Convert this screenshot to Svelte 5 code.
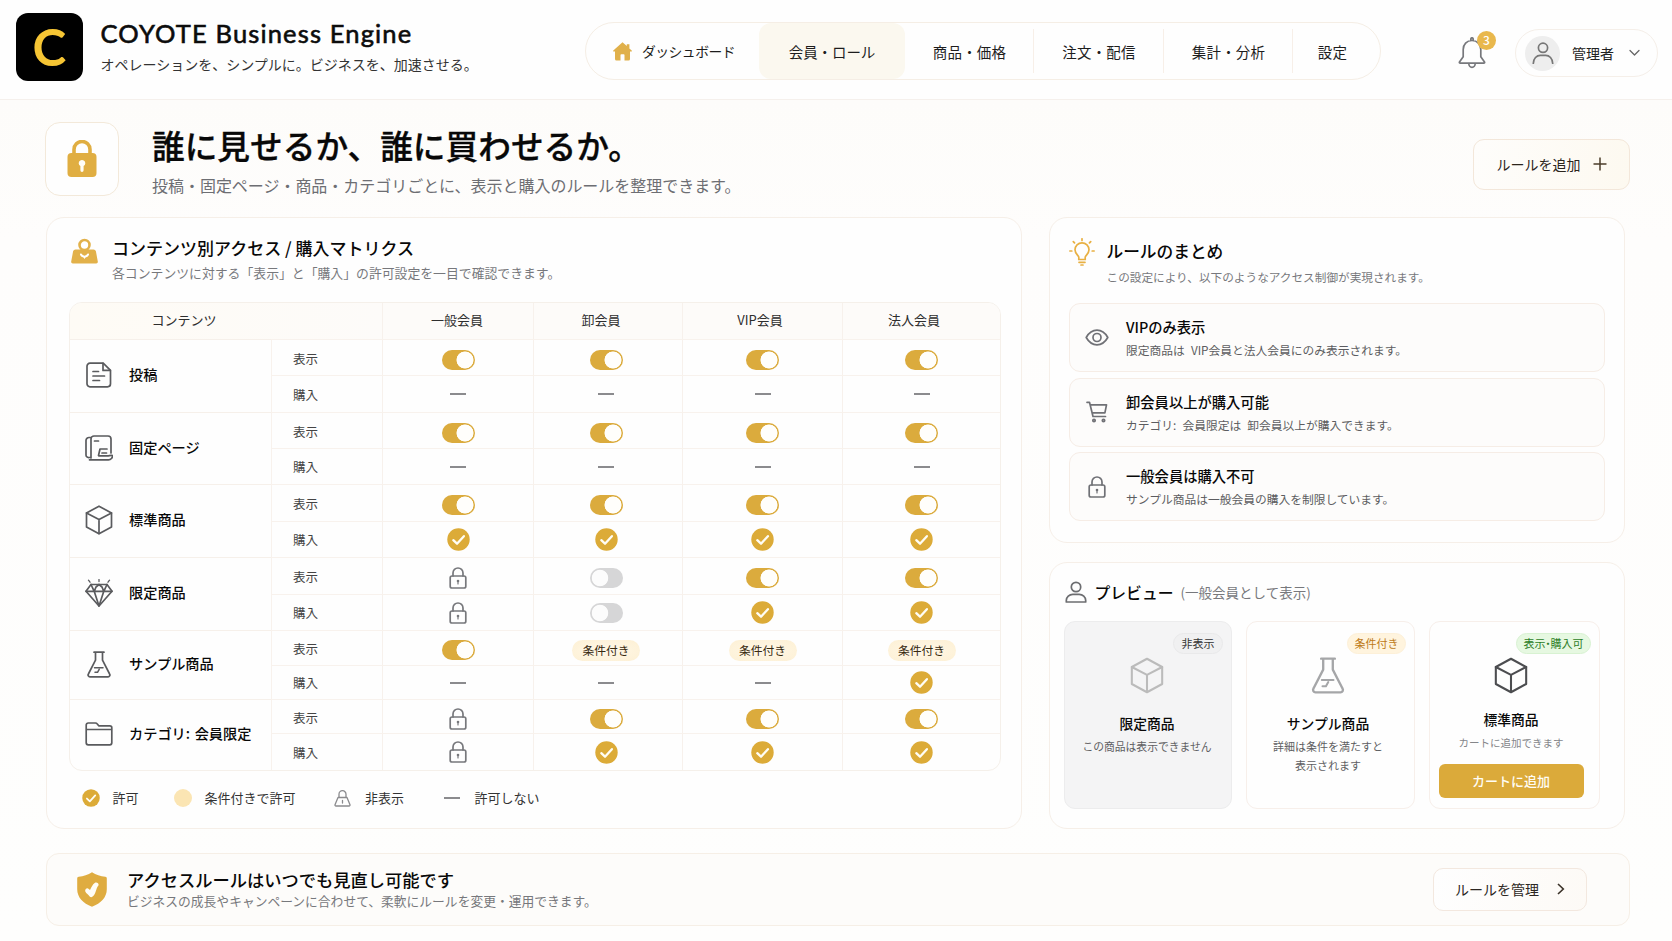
<script lang="ts">
  type Cell = 'on' | 'off' | 'check' | 'lock' | 'cond' | 'none';

  interface Row {
    icon: string;
    name: string;
    view: Cell[];
    buy: Cell[];
  }

  const nav = ['ダッシュボード', '会員・ロール', '商品・価格', '注文・配信', '集計・分析', '設定'];
  const roles = ['一般会員', '卸会員', 'VIP会員', '法人会員'];

  const rows: Row[] = [
    { icon: 'doc', name: '投稿', view: ['on', 'on', 'on', 'on'], buy: ['none', 'none', 'none', 'none'] },
    { icon: 'page', name: '固定ページ', view: ['on', 'on', 'on', 'on'], buy: ['none', 'none', 'none', 'none'] },
    { icon: 'cube', name: '標準商品', view: ['on', 'on', 'on', 'on'], buy: ['check', 'check', 'check', 'check'] },
    { icon: 'gem', name: '限定商品', view: ['lock', 'off', 'on', 'on'], buy: ['lock', 'off', 'check', 'check'] },
    { icon: 'flask', name: 'サンプル商品', view: ['on', 'cond', 'cond', 'cond'], buy: ['none', 'none', 'none', 'check'] },
    { icon: 'folder', name: 'カテゴリ: 会員限定', view: ['lock', 'on', 'on', 'on'], buy: ['lock', 'check', 'check', 'check'] }
  ];

  const rules = [
    { icon: 'eye', title: 'VIPのみ表示', text: '限定商品は VIP会員と法人会員にのみ表示されます。' },
    { icon: 'cart', title: '卸会員以上が購入可能', text: 'カテゴリ: 会員限定は 卸会員以上が購入できます。' },
    { icon: 'lock', title: '一般会員は購入不可', text: 'サンプル商品は一般会員の購入を制限しています。' }
  ];
</script>

{#snippet icon(name: string)}
  {#if name === 'doc'}
    <svg class="line" width="26" height="26" viewBox="0 0 26 26">
      <path d="M4 1.2h13.2l7.3 7.2v13.4a3 3 0 0 1-3 3H4a3 3 0 0 1-3-3V4.200a3 3 0 0 1 3-3z" />
      <path d="M17 1.400v7h7.300M7 9.500h5.500M7 14h11.500M7 18.500h6.500" />
    </svg>
  {:else if name === 'page'}
    <svg class="line" width="28" height="26" viewBox="0 0 28 26">
      <path d="M6 23V4a3 3 0 0 1 3-3h14a3 3 0 0 1 3 3v14M6 2.500H4a3 3 0 0 0-3 3V20a2.500 2.500 0 0 0 3 2.500h2" />
      <path d="M4.500 24.800h19a4 4 0 0 0 4-4.300c-2-.7-3.500.6-5.500.4h-8M13.500 20.500l1.500-6.500h7M17 18h4.500M9.500 6h4" />
    </svg>
  {:else if name === 'cube'}
    <svg class="line" width="28" height="30" viewBox="0 0 28 30">
      <path d="M14 1.200 26.500 8v14L14 28.800 1.500 22V8z" />
      <path d="M1.500 8 14 14.500 26.500 8M14 14.500v14" />
    </svg>
  {:else if name === 'gem'}
    <svg class="line" width="28" height="28" viewBox="0 0 28 28">
      <path d="M6 5.500h16l5 6.800L14 27 1 12.300z" />
      <path d="M1 12.300h26M6 5.500l3.200 6.800L14 27l4.800-14.700L22 5.500M9.200 12.300 11 8l3-2.500L17 8l1.800 4.300" />
      <path d="M3.500 1.200 5 3.200M14 .5v2M24.500 1.200 23 3.200" stroke-width="1.300" />
    </svg>
  {:else if name === 'flask'}
    <svg class="line" width="24" height="27" viewBox="0 0 24 27">
      <path d="M7 1.200h10M8.500 1.200v8L1.400 23a1.800 1.800 0 0 0 1.600 2.800h18a1.800 1.800 0 0 0 1.600-2.800L15.500 9.200v-8" />
      <path d="M7.500 16.800h8.500M8 21.300h2.500l1.700-3" stroke-width="1.500" />
    </svg>
  {:else if name === 'folder'}
    <svg class="line" width="28" height="24" viewBox="0 0 28 24">
      <path d="M1.200 7.500V3a2 2 0 0 1 2-2h7.300a2 2 0 0 1 1.600.8l1.600 2H24.800a2 2 0 0 1 2 2v15a2 2 0 0 1-2 2H3.200a2 2 0 0 1-2-2zH26.800" />
    </svg>
  {:else if name === 'eye'}
    <svg class="line" width="24" height="17" viewBox="0 0 24 17">
      <path d="M1.200 8.500C4 3.600 7.700 1.200 12 1.200s8 2.400 10.800 7.300C20 13.400 16.300 15.800 12 15.800S4 13.400 1.200 8.500z" />
      <circle cx="12" cy="8.500" r="4" />
    </svg>
  {:else if name === 'cart'}
    <svg class="line" width="22" height="22" viewBox="0 0 22 22">
      <path d="M1 1.300h2.500l3.500 14.200h12.500M4.500 3.800h16l-1.600 8H6.200" />
      <circle cx="8" cy="19.500" r="1.200" />
      <circle cx="17.500" cy="19.500" r="1.200" />
    </svg>
  {:else if name === 'lock'}
    <svg class="line" width="18" height="22" viewBox="0 0 18 22">
      <rect x="1.200" y="9" width="15.600" height="12" rx="1.800" />
      <path d="M4 9V6a5 5 0 0 1 10 0v3" />
      <circle cx="9" cy="14" r="1.300" fill="currentColor" stroke="none" />
      <path d="M9 14v3" stroke-width="1.200" />
    </svg>
  {:else if name === 'check'}
    <svg width="23" height="23" viewBox="0 0 23 23">
      <circle cx="11.500" cy="11.500" r="11.200" fill="#dcab38" />
      <path d="M6.300 12.200 10 15.700l6.900-7.500" fill="none" stroke="#fffdf5" stroke-width="2.300" stroke-linecap="round" stroke-linejoin="round" />
    </svg>
  {:else if name === 'user'}
    <svg class="line" width="22" height="22" viewBox="0 0 22 22">
      <circle cx="11" cy="6" r="4.700" />
      <path d="M1.300 21v-1.500c0-3.600 3-6.200 6.500-6.200h6.400c3.500 0 6.500 2.600 6.500 6.200V21z" />
    </svg>
  {/if}
{/snippet}

{#snippet mark(kind: Cell)}
  {#if kind === 'on' || kind === 'off'}
    <span class="toggle" class:off={kind === 'off'}></span>
  {:else if kind === 'cond'}
    <span class="pill">条件付き</span>
  {:else if kind === 'none'}
    <span class="dash"></span>
  {:else}
    {@render icon(kind)}
  {/if}
{/snippet}

<div class="page">
  <header>
    <div class="brand">
      <div class="logo">C</div>
      <div>
        <div class="brand-name">COYOTE Business Engine</div>
        <div class="tagline">オペレーションを、シンプルに。ビジネスを、加速させる。</div>
      </div>
    </div>

    <nav>
      {#each nav as item, i}
        <a href="#top" class:home={i === 0} class:active={i === 1}>
          {#if i === 0}
            <svg width="19" height="19" viewBox="0 0 19 19" fill="#e0b04a">
              <path d="M9.500.3 13.800 4V2.300h2.600v4.100l2.300 2.100c.4.400.1 1-.4 1H17V17a1.500 1.500 0 0 1-1.500 1.500h-4V13a.8.800 0 0 0-.8-.8H8.300a.8.800 0 0 0-.8.800v5.500h-4A1.500 1.500 0 0 1 2 17V9.500H.7c-.5 0-.8-.6-.4-1z" />
            </svg>
          {/if}
          {item}
        </a>
      {/each}
    </nav>

    <div class="account">
      <div class="bell">
        <svg class="line" width="28" height="32" viewBox="0 0 28 32">
          <path d="M14 3.500c-5.300 0-8.800 4-8.800 9v7.200L1.500 25c-.3.600 0 1.200.7 1.200h23.600c.7 0 1-.6.700-1.200l-3.700-5.300v-7.200c0-5-3.500-9-8.800-9zM12.800 3.500V2a1.200 1.200 0 0 1 2.400 0v1.500M10.800 26.500a3.200 3.800 0 0 0 6.400 0" />
        </svg>
        <span class="badge">3</span>
      </div>
      <div class="user">
        <span class="avatar">
          <svg class="line" width="22" height="22" viewBox="0 0 22 22">
            <circle cx="11" cy="5.800" r="4.600" />
            <path d="M1.300 21.500c0-5 3.500-8.200 7-8.200h5.400c3.500 0 7 3.200 7 8.200" />
          </svg>
        </span>
        管理者
        <svg class="line" width="11" height="8" viewBox="0 0 11 8"><path d="M1 1.500l4.500 4.500L10 1.500" stroke-width="1.300" /></svg>
      </div>
    </div>
  </header>

  <section class="hero">
    <div class="hero-icon">
      <svg width="30" height="38" viewBox="0 0 30 38">
        <path d="M7 14V9.500a8 8 0 0 1 16 0V14" fill="none" stroke="#e0ae42" stroke-width="3.600" />
        <rect x=".5" y="13" width="29" height="24" rx="4" fill="#e0ae42" />
        <path d="M15 20a3.200 3.200 0 0 1 2.800 4.900l-1.200 1v4.400a1.600 1.600 0 0 1-3.200 0v-4.400l-1.200-1A3.200 3.200 0 0 1 15 20z" fill="#fffdf6" />
      </svg>
    </div>
    <div class="hero-text">
      <h1>誰に見せるか、誰に買わせるか。</h1>
      <p>投稿・固定ページ・商品・カテゴリごとに、表示と購入のルールを整理できます。</p>
    </div>
    <button class="add">
      ルールを追加
      <svg width="14" height="14" viewBox="0 0 14 14"><path d="M7 .5v13M.5 7h13" stroke="#4b3d2a" stroke-width="1.500" /></svg>
    </button>
  </section>

  <main>
    <section class="card matrix">
      <div class="matrix-head">
        <svg width="27" height="26" viewBox="0 0 27 26">
          <path d="M4.500 11.500h18a2.500 2.500 0 0 1 2.400 1.800l1.900 10.200a1.700 1.700 0 0 1-1.700 2H1.900a1.700 1.700 0 0 1-1.700-2L2.100 13.300a2.500 2.500 0 0 1 2.400-1.800z" fill="#e2b14a" />
          <circle cx="13.500" cy="7" r="5" fill="#fff" stroke="#e2b14a" stroke-width="2.600" />
          <path d="M10 16.500c1 2.300 2.500 1.300 3.500 2.700 1-1.400 2.500-.4 3.500-2.700" fill="none" stroke="#fff" stroke-width="2" stroke-linecap="round" />
        </svg>
        <div>
          <h2>コンテンツ別アクセス / 購入マトリクス</h2>
          <p>各コンテンツに対する「表示」と「購入」の許可設定を一目で確認できます。</p>
        </div>
      </div>

      <div class="table">
        <div class="th first">コンテンツ</div>
        {#each roles as role}
          <div class="th">{role}</div>
        {/each}
        {#each rows as row}
          <div class="name">
            <span class="name-icon">{@render icon(row.icon)}</span>
            {row.name}
          </div>
          <div class="op view">表示</div>
          {#each row.view as kind, col}
            <div class="cell view" class:col2={col === 1}>{@render mark(kind)}</div>
          {/each}
          <div class="op">購入</div>
          {#each row.buy as kind, col}
            <div class="cell" class:col2={col === 1}>{@render mark(kind)}</div>
          {/each}
        {/each}
      </div>

      <div class="legend">
        <span class="l-check">{@render icon('check')}許可</span>
        <span class="l-cond"><i></i>条件付きで許可</span>
        <span class="l-lock">
          <svg class="line" width="17" height="17" viewBox="0 0 17 17">
            <path d="M4 7.500h9l3 7.200a1 1 0 0 1-1 1.300H2a1 1 0 0 1-1-1.300zM5 7.500V4.200a3.500 3.500 0 0 1 7 0v3.300M8.500 10.500v2.500" stroke-width="1.300" />
          </svg>
          非表示
        </span>
        <span class="l-none"><span class="dash"></span>許可しない</span>
      </div>
    </section>

    <div class="side">
      <section class="card summary">
        <div class="summary-head">
          <svg width="26" height="28" viewBox="0 0 26 28" fill="none" stroke="#e8b043" stroke-width="1.700" stroke-linecap="round">
            <path d="M9.800 21.500v-2.200c0-1.800-3.800-3.300-3.800-7.500a7 7 0 0 1 14 0c0 4.200-3.800 5.700-3.800 7.500v2.200zM10 24.300h6M12 27h2" />
            <path d="M13 .8v1.700M4.300 3.600l1.200 1.300M21.700 3.600l-1.200 1.300M.8 13h2M23.200 13h2" />
          </svg>
          <div>
            <h2>ルールのまとめ</h2>
            <p>この設定により、以下のようなアクセス制御が実現されます。</p>
          </div>
        </div>
        {#each rules as rule}
          <div class="rule">
            <span class="rule-icon">{@render icon(rule.icon)}</span>
            <div>
              <h3>{rule.title}</h3>
              <p>{rule.text}</p>
            </div>
          </div>
        {/each}
      </section>

      <section class="card preview">
        <div class="preview-head">
          {@render icon('user')}
          <h2>プレビュー</h2>
          <span>(一般会員として表示)</span>
        </div>
        <div class="products">
          <article class="hidden">
            <span class="tag">非表示</span>
            {@render icon('cube')}
            <h3>限定商品</h3>
            <p>この商品は表示できません</p>
          </article>
          <article class="conditional">
            <span class="tag">条件付き</span>
            {@render icon('flask')}
            <h3>サンプル商品</h3>
            <p>詳細は条件を満たすと<br />表示されます</p>
          </article>
          <article class="open">
            <span class="tag">表示<b>・</b>購入可</span>
            {@render icon('cube')}
            <h3>標準商品</h3>
            <p>カートに追加できます</p>
            <button>カートに追加</button>
          </article>
        </div>
      </section>
    </div>
  </main>

  <footer>
    <svg width="30" height="35" viewBox="0 0 30 35">
      <path d="M15 .3c4 2.500 8.500 4 13.300 4.500 1 .1 1.500.7 1.500 1.600v10.800c0 8-5.800 14-14.800 17.500C6 31.200.2 25.200.2 17.200V6.400c0-.9.500-1.500 1.500-1.600C6.500 4.300 11 2.800 15 .3z" fill="#dfac40" />
      <path d="M9 16.800c1.500-1.500 3 .2 4 1.200 1.500-2.500 2.200-5.500 5-7.300 1.800-.8 4 .6 3.600 2.500-1.800 1.500-2.600 6.500-4.200 9.300-1 1.800-3 3.500-4.500 2.200-1.500-2.400-3.600-3-4.600-5.300-.3-1 .1-2 .7-2.600z" fill="#fffdf6" />
    </svg>
    <div class="footer-text">
      <h2>アクセスルールはいつでも見直し可能です</h2>
      <p>ビジネスの成長やキャンペーンに合わせて、柔軟にルールを変更・運用できます。</p>
    </div>
    <button>
      ルールを管理
      <svg width="8" height="12" viewBox="0 0 8 12"><path d="M1 1l5.300 5L1 11" fill="none" stroke="#3a3128" stroke-width="1.600" /></svg>
    </button>
  </footer>
</div>

<style>
  :global(body) {
    background: #fefdfc;
  }

  .page {
    box-sizing: border-box;
    width: 1672px;
    height: 941px;
    overflow: hidden;
    background: linear-gradient(#fdfcfa 100px, #fefdfc 240px, #fefefd);
    color: #080808;
    font-family: 'Noto Sans CJK JP', 'Noto Sans', sans-serif;
    font-size: 14px;
  }

  .page :global(*) {
    box-sizing: border-box;
  }

  h1, h2, h3, p {
    margin: 0;
    font-weight: 500;
    white-space: nowrap;
  }

  p {
    font-weight: 400;
    color: #6d6e73;
  }

  button {
    font-family: inherit;
    padding: 0;
  }

  svg {
    display: block;
    flex: none;
  }

  .line {
    fill: none;
    stroke: currentColor;
    stroke-width: 1.7;
    stroke-linecap: round;
    stroke-linejoin: round;
  }

  .card {
    background: #fefefe;
    border: 1px solid #f6efe8;
    border-radius: 18px;
  }

  /* header */
  header {
    display: grid;
    grid-template-columns: 569px 796px 1fr;
    height: 100px;
    padding: 0 14px 0 16px;
    background: #fefefe;
    border-bottom: 1px solid #f5f0ec;
  }

  .brand {
    display: flex;
    gap: 18px;
    padding-top: 13px;
  }

  .logo {
    width: 66.5px;
    height: 67.5px;
    border-radius: 12px;
    background: #000;
    color: #f6c534;
    font: 700 51px/67px Lato, sans-serif;
    text-align: center;
  }

  .brand-name {
    margin-top: 3px;
    font-family: Lato, sans-serif;
    font-size: 25.5px;
    font-weight: 400;
    letter-spacing: 1.15px;
    line-height: 35px;
    color: #0c0c0c;
    -webkit-text-stroke: 0.6px;
    white-space: nowrap;
  }

  .tagline {
    margin-top: 3px;
    font-size: 14px;
    line-height: 20px;
    color: #333;
    white-space: nowrap;
  }

  nav {
    display: grid;
    grid-template-columns: 173px 146px 129px 130px 129px 1fr;
    height: 58px;
    margin-top: 22px;
    border: 1px solid #f5eee5;
    border-radius: 29px;
    overflow: hidden;
  }

  nav a {
    display: flex;
    align-items: center;
    justify-content: center;
    color: #1d1d1d;
    font-size: 14.5px;
    letter-spacing: 0.2px;
    text-decoration: none;
    white-space: nowrap;
    background: linear-gradient(#f7efe8, #f7efe8) right center / 1px 44px no-repeat;
  }

  nav a:last-child {
    padding-right: 8px;
    background: none;
  }

  nav .home {
    gap: 10px;
    padding-left: 3px;
    font-size: 13.8px;
    letter-spacing: -0.5px;
    background: none;
  }

  nav .active {
    background: #fbf8ef;
    border-radius: 12px;
    letter-spacing: -0.1px;
  }

  .account {
    display: flex;
    gap: 29px;
    padding: 29px 0 0 77px;
    color: #77787c;
  }

  .bell {
    position: relative;
    padding-top: 8px;
    height: 40px;
  }

  .badge {
    position: absolute;
    top: 2px;
    right: -10px;
    width: 19px;
    height: 19px;
    border-radius: 50%;
    background: #e9b84d;
    color: #fff;
    font-size: 12px;
    font-weight: 500;
    line-height: 18px;
    text-align: center;
  }

  .user {
    display: flex;
    align-items: center;
    width: 143px;
    height: 48px;
    padding-left: 9px;
    border: 1px solid #f5efe9;
    border-radius: 24px;
    white-space: nowrap;
    color: #222;
  }

  .user > svg {
    margin-left: 15px;
    color: #666;
  }

  .avatar {
    display: grid;
    place-items: center;
    width: 35px;
    height: 35px;
    margin-right: 12px;
    border-radius: 50%;
    background: #eee;
    color: #777;
  }

  /* page heading */
  .hero {
    display: flex;
    height: 117px;
    padding: 22px 42px 0 45px;
  }

  .hero-icon {
    display: grid;
    place-items: center;
    width: 74px;
    height: 74px;
    border: 1px solid #f3e9da;
    border-radius: 15px;
    background: #fefefe;
  }

  .hero-text {
    flex: 1;
    margin-left: 33px;
  }

  h1 {
    font-size: 32.7px;
    line-height: 46px;
    color: #080808;
    -webkit-text-stroke: 0.35px;
  }

  .hero-text p {
    margin-top: 7px;
    font-size: 15.97px;
    line-height: 20px;
  }

  .add {
    display: flex;
    align-items: center;
    justify-content: center;
    gap: 12px;
    width: 157px;
    height: 51px;
    margin-top: 17px;
    padding-bottom: 2px;
    border: 1px solid #f3e7da;
    border-radius: 11px;
    background: linear-gradient(100deg, #fefdfb, #fdf9f0);
    color: #2c251c;
    font-size: 14px;
  }

  /* two columns */
  main {
    display: grid;
    grid-template-columns: 976px 576px;
    gap: 27px;
    height: 612px;
    padding-left: 46px;
  }

  .matrix {
    padding: 19px 0 0 22px;
  }

  .matrix-head {
    display: flex;
    gap: 14px;
    height: 65px;
    padding-left: 2px;
  }

  .matrix-head svg {
    margin-top: 1px;
  }

  .matrix-head h2 {
    font-size: 17px;
    line-height: 22px;
  }

  .matrix-head p {
    margin-top: 4px;
    font-size: 12.85px;
    line-height: 20px;
    color: #77787c;
  }

  .table {
    display: grid;
    grid-template-columns: 201px 111px 151px 149px 160px 1fr;
    grid-template-rows: 36px 36px 37px 36px 36px 37px 36px 37px 36px 35px 34px 34px 37px;
    width: 932px;
    border: 1px solid #f5f0ea;
    border-radius: 13px;
    overflow: hidden;
  }

  .th {
    display: flex;
    align-items: center;
    justify-content: center;
    padding-bottom: 3px;
    background: #fdfbf9;
    border-left: 1px solid #f7f1ec;
    color: #2e2e2e;
    font-size: 13px;
  }

  .th.first {
    grid-column: span 2;
    padding-right: 84px;
    border-left: 0;
    background: linear-gradient(90deg, #fefbf5, #fdfbf9);
  }

  .th:nth-child(2) {
    padding-right: 2px;
  }

  .th:nth-child(3) {
    padding-right: 14px;
  }

  .th:nth-child(4) {
    padding-right: 5px;
  }

  .th:nth-child(5) {
    padding-right: 15px;
  }

  .name {
    grid-row: span 2;
    display: flex;
    align-items: center;
    padding-bottom: 4px;
    border-top: 1px solid #f6f0ea;
    font-size: 14.2px;
    font-weight: 500;
    word-spacing: 1.5px;
    white-space: nowrap;
  }

  .name-icon {
    display: grid;
    place-items: center;
    width: 28px;
    margin: 2px 16px 0 15px;
    color: #5a5b5e;
  }

  .op {
    display: flex;
    align-items: center;
    padding: 0 0 0 21px;
    border-top: 1px solid #f8f2ed;
    border-left: 1px solid #f8f2ed;
    color: #444;
    font-size: 12.5px;
  }

  .cell {
    display: flex;
    align-items: center;
    justify-content: center;
    border-top: 1px solid #f8f2ed;
    border-left: 1px solid #f7f1ec;
    color: #77787c;
  }

  .cell.view {
    padding-top: 4px;
  }

  .cell.col2 {
    padding-right: 4px;
  }

  .op.view {
    padding-top: 1px;
  }

  .toggle {
    width: 33px;
    height: 20px;
    border-radius: 10px;
    background: radial-gradient(circle at 23px 10px, #fffefb 8.2px, transparent 8.8px), #dbab3d;
  }

  .toggle.off {
    background: radial-gradient(circle at 10px 10px, #fcfcfc 7.8px, transparent 8.6px), #d6d6d7;
  }

  .dash {
    width: 16px;
    height: 2px;
    background: #8b8b8e;
  }

  .pill {
    width: 68px;
    height: 21px;
    border-radius: 11px;
    background: radial-gradient(ellipse, #fff8e8, #fdf0d4);
    color: #37290f;
    font-size: 11.8px;
    line-height: 19px;
    text-align: center;
  }

  .legend {
    display: flex;
    align-items: center;
    height: 54px;
    padding-left: 12.5px;
    color: #333;
    font-size: 13px;
    line-height: 18px;
  }

  .legend > span {
    display: flex;
    align-items: center;
    white-space: nowrap;
  }

  .legend i {
    width: 18px;
    height: 18px;
    border-radius: 50%;
    background: #fbe5b3;
  }

  .l-check {
    gap: 13px;
  }

  .l-check :global(svg) {
    width: 18px;
    height: 18px;
  }

  .l-cond {
    gap: 13px;
    margin-left: 35px;
  }

  .l-lock {
    gap: 14.5px;
    margin-left: 38px;
  }

  .l-lock svg {
    color: #8a8a8d;
  }

  .l-none {
    gap: 15px;
    margin-left: 39.5px;
  }

  .side {
    display: grid;
    grid-template-rows: 326px 267px;
    gap: 19px;
  }

  .summary {
    padding: 20px 19px 0 19px;
  }

  .summary-head {
    display: flex;
    gap: 11.5px;
    height: 65px;
  }

  .summary-head h2 {
    margin-top: 2px;
    font-size: 16.7px;
    line-height: 22px;
  }

  .summary-head p {
    margin-top: 6px;
    font-size: 11.65px;
    line-height: 18px;
    color: #77787c;
  }

  .rule {
    display: flex;
    align-items: center;
    height: 69px;
    margin-bottom: 5.5px;
    border: 1px solid #f6ede6;
    border-radius: 11px;
    background: #fdfcfb;
  }

  .rule-icon {
    display: grid;
    place-items: center;
    width: 24px;
    margin: 0 17px 0 15px;
    color: #707176;
  }

  .rule h3 {
    font-size: 14.3px;
    line-height: 22px;
  }

  .rule p {
    margin-top: 3px;
    font-size: 11.75px;
    line-height: 18px;
    word-spacing: 3.5px;
    color: #5c5c60;
  }

  .preview {
    padding: 13px 0 0 14px;
  }

  .preview-head {
    display: flex;
    align-items: center;
    height: 32px;
    padding: 0 0 0 1px;
    color: #6c6d70;
  }

  .preview-head h2 {
    margin: 0 7px 0 7.5px;
    color: #080808;
    font-size: 15.8px;
  }

  .preview-head span {
    font-size: 13.5px;
    color: #77787c;
  }

  .products {
    display: grid;
    grid-template-columns: 168px 169px 171px;
    gap: 14px;
    height: 188px;
    margin-top: 12.5px;
  }

  article {
    position: relative;
    display: flex;
    flex-direction: column;
    align-items: center;
    padding-top: 35px;
    border: 1px solid #f7efea;
    border-radius: 11px;
    color: #4c4d50;
  }

  article :global(svg) {
    width: 34px;
    height: 37px;
  }

  article h3 {
    margin-top: 19px;
    color: #080808;
    font-size: 13.8px;
    line-height: 20px;
  }

  article p {
    margin-top: 4px;
    color: #5e5e62;
    font-size: 11px;
    line-height: 19px;
    text-align: center;
  }

  .tag {
    position: absolute;
    top: 11px;
    right: 8px;
    height: 21px;
    padding: 0 7.5px;
    border: 1px solid #e9e9ea;
    border-radius: 11px;
    background: #f0f0f1;
    color: #333;
    font-size: 11px;
    line-height: 18px;
    white-space: nowrap;
  }

  .tag b {
    margin: 0 -3px;
    font-weight: 400;
  }

  .hidden {
    padding-right: 2px;
    background: #f4f4f5;
    border-color: #ececed;
    color: #bbb;
  }

  .hidden p {
    font-size: 10.8px;
  }

  .conditional {
    padding-right: 5px;
    color: #a5a6a8;
  }

  .conditional .tag {
    padding: 0 6.5px;
    border-color: #fdf0d8;
    background: #fff4de;
    color: #bd7a18;
  }

  .open {
    padding: 35px 7px 0 0;
  }

  .open h3 {
    margin-top: 15px;
  }

  .open p {
    color: #85868a;
    font-size: 10.5px;
  }

  .open .tag {
    padding: 0 6.5px;
    border-color: #d8f2d2;
    background: #e6f8e1;
    color: #2c7d27;
  }

  .open button {
    width: 145px;
    height: 34px;
    margin-top: 12px;
    border: 0;
    border-radius: 6px;
    background: #dbaa3a;
    color: #fffdf5;
    font-size: 13px;
    font-weight: 500;
    line-height: 30px;
  }

  /* bottom bar */
  footer {
    display: flex;
    align-items: center;
    width: 1584px;
    height: 73px;
    margin: 24px 0 0 46px;
    padding: 0 42px 0 30px;
    border: 1px solid #f6efe6;
    border-radius: 13px;
    background: #fdfcfa;
  }

  .footer-text {
    flex: 1;
    margin-left: 20px;
  }

  .footer-text h2 {
    font-size: 17.25px;
    line-height: 22px;
  }

  .footer-text p {
    font-size: 12.78px;
    line-height: 20px;
    color: #77787c;
  }

  footer button {
    display: flex;
    align-items: center;
    justify-content: center;
    gap: 18px;
    width: 154px;
    height: 43px;
    padding-bottom: 2px;
    border: 1px solid #f3e8df;
    border-radius: 10px;
    background: linear-gradient(100deg, #fefefe, #fdfaf6);
    color: #2c2723;
    font-size: 14px;
  }
</style>
